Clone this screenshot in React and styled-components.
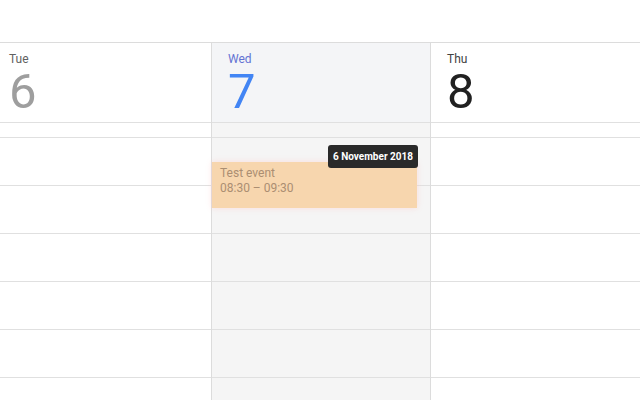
import React from 'react';
import styled, { createGlobalStyle } from 'styled-components';

const GlobalStyle = createGlobalStyle`
  html, body {
    margin: 0;
    padding: 0;
    background: #fff;
    font-family: Roboto, 'Noto Sans', Arial, sans-serif;
    overflow: hidden;
  }
`;

const Page = styled.div`
  width: 640px;
  height: 400px;
  overflow: hidden;
  background: #fff;
`;

const TopBar = styled.div`
  height: 42px;
  border-bottom: 1px solid #dcdcdc;
`;

const Week = styled.div`
  display: flex;
  margin-left: -7px;
`;

const Column = styled.div`
  flex: 0 0 218px;
  display: flex;
  flex-direction: column;
  border-right: 1px solid #dcdcdc;
  background: ${p => (p.$today ? '#f5f5f5' : '#fff')};
`;

const DayHeader = styled.div`
  height: 80px;
  padding: 8px 0 0 16px;
  box-sizing: border-box;
  border-bottom: 1px solid #e0e0e0;
  background: ${p => (p.$today ? '#f4f5f7' : 'transparent')};
`;

const DayName = styled.div`
  font-size: 12px;
  line-height: 16px;
  color: ${p => p.$color};
`;

const DayNumber = styled.div`
  font-size: 49px;
  line-height: 50px;
  font-weight: 400;
  color: ${p => p.$color};
`;

const AllDay = styled.div`
  height: 14px;
  border-bottom: 1px solid #e0e0e0;
`;

const Body = styled.div`
  position: relative;
`;

const Slot = styled.div`
  height: 47px;
  border-bottom: 1px solid #e0e0e0;
`;

const Event = styled.div`
  position: absolute;
  left: 0;
  right: 13px;
  top: 24px;
  height: 46px;
  padding: 4px 8px 0;
  box-sizing: border-box;
  background: #f7d6ae;
  box-shadow: 0 0 6px rgba(255, 190, 190, 0.45);
  color: #ab8e72;
  font-size: 12px;
  line-height: 15px;
`;

const Tooltip = styled.div`
  position: absolute;
  top: 7px;
  right: 12px;
  height: 23px;
  padding: 0 5px;
  box-sizing: border-box;
  display: flex;
  align-items: center;
  background: #2a2a2a;
  border-radius: 3px;
  color: #fff;
  font-size: 10px;
  font-weight: 700;
  white-space: nowrap;
  z-index: 2;
`;

const days = [
  { name: 'Tue', num: 6, nameColor: '#616161', numColor: '#9e9e9e' },
  { name: 'Wed', num: 7, nameColor: '#6373d3', numColor: '#4285f4', today: true },
  { name: 'Thu', num: 8, nameColor: '#424242', numColor: '#212121' },
];

export default function App() {
  return (
    <Page>
      <GlobalStyle />
      <TopBar />
      <Week>
        {days.map(d => (
          <Column key={d.name} $today={d.today}>
            <DayHeader $today={d.today}>
              <DayName $color={d.nameColor}>{d.name}</DayName>
              <DayNumber $color={d.numColor}>{d.num}</DayNumber>
            </DayHeader>
            <AllDay />
            <Body>
              {[0, 1, 2, 3, 4, 5].map(i => (
                <Slot key={i} />
              ))}
              {d.today && (
                <>
                  <Event>
                    <div>Test event</div>
                    <div>08:30 – 09:30</div>
                  </Event>
                  <Tooltip>6 November 2018</Tooltip>
                </>
              )}
            </Body>
          </Column>
        ))}
      </Week>
    </Page>
  );
}
